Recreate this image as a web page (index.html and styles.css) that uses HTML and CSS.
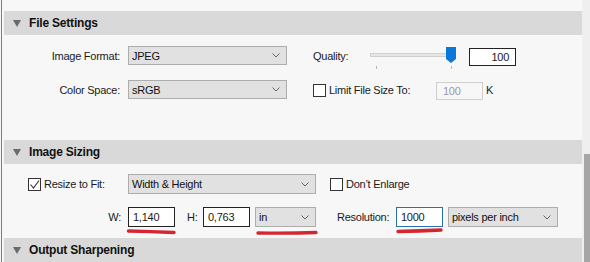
FILE: index.html
```html
<!DOCTYPE html>
<html>
<head>
<meta charset="utf-8">
<link rel="stylesheet" href="styles.css">
</head>
<body>
<div class="app">
  <div class="panel">
    <div class="header">
      <svg class="tri" width="8" height="7" viewBox="0 0 8 7"><polygon points="0,0 8,0 4,7" fill="#6b6b6b"/></svg>
      <span class="htext">File Settings</span>
    </div>
    <div class="content c1">
      <div class="row r1">
        <span class="lbl">Image Format:</span>
        <div class="select w159"><span>JPEG</span><svg class="chev" width="8" height="5" viewBox="0 0 8 5"><polyline points="0.5,0.5 4,4 7.5,0.5" fill="none" stroke="#666" stroke-width="1"/></svg></div>
        <span class="qlbl">Quality:</span>
        <svg class="slider" width="86" height="23" viewBox="0 0 86 23">
          <rect x="0.5" y="6.5" width="80" height="3" fill="#e6e6e6" stroke="#d0d0d0"/>
          <rect x="6" y="19" width="1" height="3" fill="#b5b5b5"/>
          <rect x="81" y="19" width="1" height="3" fill="#b5b5b5"/>
          <polygon points="76,0 86,0 86,12 81,16 76,12" fill="#0a78d6"/>
        </svg>
        <div class="inp qual">100</div>
      </div>
      <div class="row r2">
        <span class="lbl">Color Space:</span>
        <div class="select w159"><span>sRGB</span><svg class="chev" width="8" height="5" viewBox="0 0 8 5"><polyline points="0.5,0.5 4,4 7.5,0.5" fill="none" stroke="#666" stroke-width="1"/></svg></div>
        <span class="cb cb1"></span>
        <span class="limlbl">Limit File Size To:</span>
        <div class="inp dis">100</div>
        <span class="k">K</span>
      </div>
    </div>
    <div class="header">
      <svg class="tri" width="8" height="7" viewBox="0 0 8 7"><polygon points="0,0 8,0 4,7" fill="#6b6b6b"/></svg>
      <span class="htext">Image Sizing</span>
    </div>
    <div class="content c2">
      <div class="row s1">
        <span class="cb cb2"><svg width="11" height="11" viewBox="0 0 11 11"><polyline points="1.5,5.5 4.5,9 10,1.5" fill="none" stroke="#333" stroke-width="1.1"/></svg></span>
        <span class="rlbl">Resize to Fit:</span>
        <div class="select w188"><span>Width &amp; Height</span><svg class="chev" width="8" height="5" viewBox="0 0 8 5"><polyline points="0.5,0.5 4,4 7.5,0.5" fill="none" stroke="#666" stroke-width="1"/></svg></div>
        <span class="cb cb3"></span>
        <span class="dlbl">Don’t Enlarge</span>
      </div>
      <div class="row s2">
        <span class="wlbl">W:</span>
        <div class="inp dim">1,140</div>
        <span class="hlbl">H:</span>
        <div class="inp dim">0,763</div>
        <div class="select w61"><span>in</span><svg class="chev" width="8" height="5" viewBox="0 0 8 5"><polyline points="0.5,0.5 4,4 7.5,0.5" fill="none" stroke="#666" stroke-width="1"/></svg></div>
        <span class="reslbl">Resolution:</span>
        <div class="inp dim res">1000</div>
        <div class="select w110"><span>pixels per inch</span><svg class="chev" width="8" height="5" viewBox="0 0 8 5"><polyline points="0.5,0.5 4,4 7.5,0.5" fill="none" stroke="#666" stroke-width="1"/></svg></div>
      </div>
    </div>
    <div class="header">
      <svg class="tri" width="8" height="7" viewBox="0 0 8 7"><polygon points="0,0 8,0 4,7" fill="#6b6b6b"/></svg>
      <span class="htext">Output Sharpening</span>
    </div>
  </div>
  <div class="scroll"><div class="thumb"></div></div>
</div>
<svg class="marks" width="590" height="262" viewBox="0 0 590 262">
  <path d="M128.5,231 Q150,231.5 174,232.5" fill="none" stroke="#d42530" stroke-width="3.4" stroke-linecap="round"/>
  <path d="M258,233 Q290,233.5 316,232.5" fill="none" stroke="#d42530" stroke-width="3.4" stroke-linecap="round"/>
  <path d="M398,231.5 Q420,231 441,230" fill="none" stroke="#d42530" stroke-width="3.4" stroke-linecap="round"/>
</svg>
</body>
</html>
```

FILE: styles.css
```css
html, body {
  margin: 0;
  padding: 0;
}
body {
  width: 590px;
  height: 262px;
  overflow: hidden;
  background: #f7f7f7;
  font-family: "Liberation Sans", Arial, sans-serif;
  font-size: 11px;
  letter-spacing: -0.25px;
  color: #1a1a1a;
  position: relative;
}
.app {
  display: flex;
  height: 262px;
}
.panel {
  width: 578px;
  margin-left: 1px;
  border-left: 1px solid #7c7c7c;
  padding-left: 2px;
  padding-top: 11px;
  display: flex;
  flex-direction: column;
}
.scroll {
  width: 6px;
  padding-left: 2px;
  background: #efefef;
  display: flex;
  flex-direction: column;
}
.thumb {
  margin-top: 154px;
  flex: 1;
  background: #a6a6a6;
}
.header {
  height: 24px;
  flex: none;
  background: #d9d9d9;
  display: flex;
  align-items: center;
  padding-left: 9px;
}
.tri {
  margin-right: 8px;
  margin-top: 1px;
}
.htext {
  font-weight: bold;
  font-size: 12px;
  letter-spacing: -0.2px;
  color: #111;
}
.content {
  flex: none;
}
.c1 {
  height: 105px;
  padding-top: 11px;
  box-sizing: border-box;
}
.c2 {
  height: 74px;
  padding-top: 10px;
  box-sizing: border-box;
}
.row {
  display: flex;
  align-items: center;
}
.r1, .r2 {
  height: 19px;
}
.r2 {
  margin-top: 15px;
}
.s1, .s2 {
  height: 20px;
}
.s2 {
  margin-top: 13px;
}
.lbl {
  width: 116px;
  margin-right: 8px;
  text-align: right;
}
.select {
  box-sizing: border-box;
  height: 100%;
  background: #e1e1e1;
  border: 1px solid #adadad;
  display: flex;
  align-items: center;
  justify-content: space-between;
  padding: 0 6px 0 3px;
  color: #111;
}
.chev {
  flex: none;
}
.w159 { width: 159px; }
.w188 { width: 188px; }
.w61 { width: 61px; margin-left: 5px; }
.w110 { width: 110px; margin-left: 5px; }
.qlbl {
  margin-left: 26px;
  width: 57px;
}
.slider {
  align-self: flex-start;
  margin-top: 1px;
}
.inp {
  box-sizing: border-box;
  width: 47px;
  background: #fff;
  border: 1px solid #222;
  display: flex;
  align-items: center;
  padding: 0 4px;
}
.qual {
  margin-left: 13px;
  height: 18px;
  justify-content: flex-end;
  padding-right: 6px;
  align-self: flex-start;
  margin-top: 2px;
}
.cb {
  box-sizing: border-box;
  width: 13px;
  height: 13px;
  border: 1px solid #333;
  background: #fff;
  display: flex;
  align-items: center;
  justify-content: center;
  flex: none;
}
.cb1 {
  margin-left: 26px;
  margin-top: 1px;
}
.limlbl {
  margin-left: 3px;
  width: 107px;
}
.dis {
  height: 18px;
  border-color: #cfcfcf;
  background: #f7f7f7;
  color: #9a9a9a;
  padding-left: 6px;
  margin-top: 2px;
}
.k {
  margin-left: 3px;
  margin-top: 1px;
}
.cb2 {
  margin-left: 24px;
}
.rlbl {
  margin-left: 3px;
  width: 84px;
}
.cb3 {
  margin-left: 14px;
}
.dlbl {
  margin-left: 3px;
}
.wlbl {
  width: 117px;
  margin-right: 7px;
  text-align: right;
}
.dim {
  height: 20px;
}
.hlbl {
  margin-left: 12px;
  width: 11px;
  margin-right: 5px;
}
.reslbl {
  margin-left: 21px;
  width: 52px;
  margin-right: 7px;
}
.res {
  border-color: #2a6fae;
}
.marks {
  position: absolute;
  left: 0;
  top: 0;
  pointer-events: none;
}
```
